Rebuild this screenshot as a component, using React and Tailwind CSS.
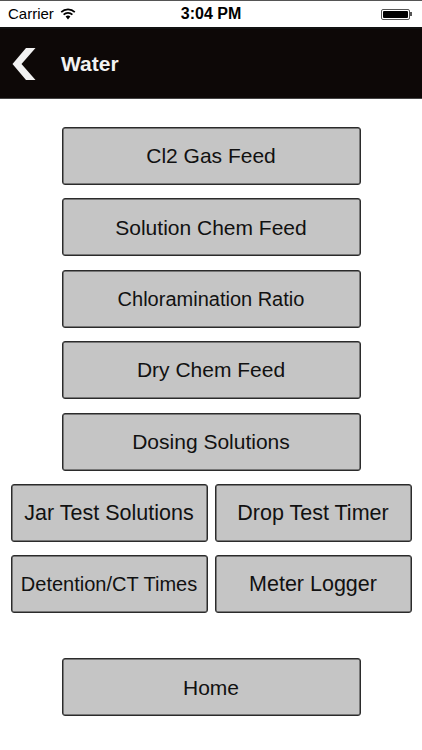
import React from 'react';

const font = { fontFamily: '"Liberation Sans", Arial, sans-serif' };

const Btn = ({ label, className = '', size = 'text-[21px]' }) => (
  <button
    className={`h-[58px] bg-[#c5c5c5] border border-[#2b2b2b] rounded-[3px] text-[#111] shadow-[inset_0_0_0_0.5px_#2b2b2b] ${size} ${className}`}
  >
    {label}
  </button>
);

const App = () => {
  return (
    <div className="w-[422px] h-[750px] bg-white overflow-hidden" style={font}>
      {/* Status bar */}
      <div className="h-[27px] border-t border-[#555] flex items-center justify-between px-[8px] relative bg-white">
        <div className="flex items-center gap-[6px] text-[15px] text-black">
          <span>Carrier</span>
          <svg width="16" height="12" viewBox="0 0 16 12">
            <path d="M8 11.5 L5.6 8.6 A3.6 3.6 0 0 1 10.4 8.6 Z" fill="#000" />
            <path d="M3.6 6.6 A6.3 6.3 0 0 1 12.4 6.6" stroke="#000" strokeWidth="1.7" fill="none" />
            <path d="M1.2 4.1 A9.6 9.6 0 0 1 14.8 4.1" stroke="#000" strokeWidth="1.7" fill="none" />
          </svg>
        </div>
        <span className="absolute left-1/2 -translate-x-1/2 text-[16px] font-bold text-black">3:04 PM</span>
        <div className="flex items-center mr-[2px]">
          <div className="w-[29px] h-[11px] border border-[#555] rounded-[2px] p-[1px]">
            <div className="w-full h-full bg-black rounded-[1px]" />
          </div>
          <div className="w-[2px] h-[4px] bg-[#555]" />
        </div>
      </div>

      {/* Nav bar */}
      <div className="h-[72px] bg-[#0d0807] border-t-2 border-[#111] border-b border-b-[#444] flex items-center">
        <svg width="26" height="34" viewBox="0 0 26 34" className="ml-[11px]">
          <path d="M15 1 L24.5 1 L10.5 17 L24.5 33 L15 33 L1.5 17 Z" fill="#f2f2f2" />
        </svg>
        <span className="ml-[24px] text-[21px] font-bold text-[#f2f2f2]">Water</span>
      </div>

      {/* Buttons */}
      <div className="flex flex-col items-center pt-[28px]">
        <div className="flex flex-col gap-[13.4px] items-center">
          <Btn label="Cl2 Gas Feed" className="w-[299px]" />
          <Btn label="Solution Chem Feed" className="w-[299px]" />
          <Btn label="Chloramination Ratio" className="w-[299px]" size="text-[20px]" />
          <Btn label="Dry Chem Feed" className="w-[299px]" />
          <Btn label="Dosing Solutions" className="w-[299px]" />
          <div className="flex gap-[7px]">
            <Btn label="Jar Test Solutions" className="w-[197px]" size="text-[21.5px]" />
            <Btn label="Drop Test Timer" className="w-[197px]" size="text-[21.5px]" />
          </div>
          <div className="flex gap-[7px]">
            <Btn label="Detention/CT Times" className="w-[197px]" size="text-[20px]" />
            <Btn label="Meter Logger" className="w-[197px]" size="text-[21.5px]" />
          </div>
        </div>
        <Btn label="Home" className="w-[299px] mt-[45px]" />
      </div>
    </div>
  );
};

export default App;
